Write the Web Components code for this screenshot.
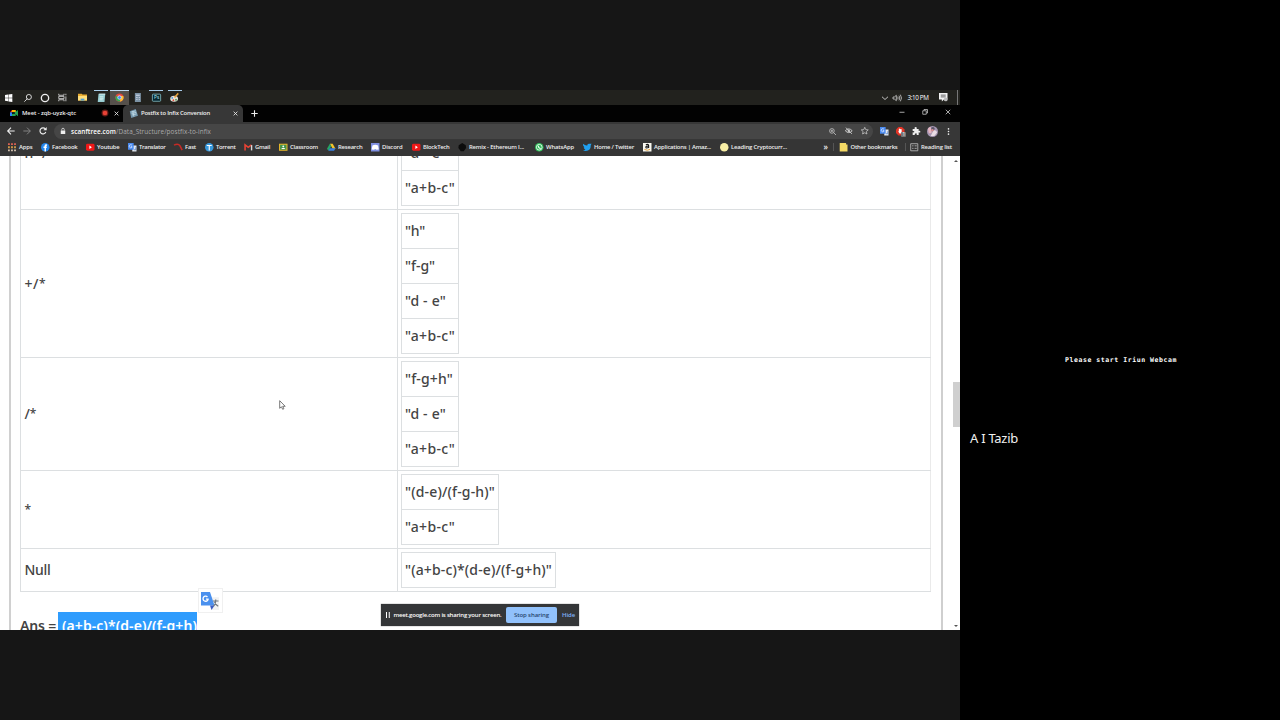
<!DOCTYPE html>
<html lang="en"><head><meta charset="utf-8"><title>Meeting</title>
<style>html,body{margin:0;width:1280px;height:720px;overflow:hidden;background:#161616}</style></head>
<body><meeting-stage></meeting-stage>
<script>
const define=(name,css,html,init)=>customElements.define(name,class extends HTMLElement{
  connectedCallback(){
    if(this.shadowRoot)return;
    const r=this.attachShadow({mode:'open'});
    const h=typeof html==='function'?html(this):html;
    r.innerHTML='<style>*{box-sizing:border-box}'+css+'</style>'+h;
    if(init)init(this,r);
  }});

/* A single-line label whose tracking is adjusted to fill a given width. */
define('fit-text',':host{display:block;white-space:pre;flex:none}span{display:inline-block}b{font-weight:600;color:#fff}em{font-style:normal;font-size:12px;line-height:10px;vertical-align:1.500px}',
  e=>`<span>${e.getAttribute('t')}</span>`,
  (e,r)=>{const w=+e.getAttribute('w'),s=r.querySelector('span');
    e.style.width=w+'px';
    const n=s.textContent.length,d=(w-s.getBoundingClientRect().width)/n;
    s.style.letterSpacing=d.toFixed(3)+'px';});

const icons={
win:'<path fill="#fff" d="M0 1.5l4.6-.7v4.8H0zM5.2.7L11 0v5.6H5.2zM0 6.2h4.6V11L0 10.3zM5.2 6.2H11V12l-5.8-.8z"/>',
search:'<g fill="none" stroke="#eee" stroke-width="1.3"><circle cx="7.3" cy="4.5" r="3.8"/><path d="M5 7L.500 11.500"/></g>',
ring:'<circle cx="6" cy="6" r="4.4" fill="none" stroke="#eee" stroke-width="1.6"/>',
task:'<path fill="none" stroke="#ccc" stroke-width="1.200" d="M1 1v2h7V1M1 11V9h7v2M1 4.5h7v3H1zM10.5 1v2M10.5 4.5v6.5"/>',
explorer:'<path fill="#e9ad32" d="M0 1h5l1 1h6v8H0z"/><path fill="#ffdf7c" d="M0 4h12v6H0z"/><path fill="#4b9fd6" d="M3.500 7.500h5V10h-5z"/>',
note:'<path fill="#95cbd0" d="M2 1h9l-1 11H1z"/><path stroke="#e9f8f7" d="M3 1.500h8M3.500 5h5M3.500 7h5M3.500 9h4"/>',
calc:'<path fill="#7c93a5" d="M2.500 0h8v12h-8z"/><path stroke="#eef" d="M4 3h5M4 6h1m1 0h1m1 0h1M4 8.500h1m1 0h1m1 0h1"/>',
ps:'<rect x=".500" y="1.500" width="11" height="9.500" rx="1" fill="#062630" stroke="#8ec9d0" stroke-width="1"/><text x="2.700" y="8.600" font-size="6.500" fill="#b8eef5" font-family="Open Sans">Ps</text>',
paint:'<ellipse cx="5.500" cy="7.500" rx="5.200" ry="4" fill="#e8e2da"/><circle cx="3" cy="6.500" r="1.200" fill="#4b96db"/><circle cx="4.500" cy="9.500" r="1.200" fill="#d64b3b"/><circle cx="8" cy="9" r="1.200" fill="#4a9853"/><path stroke="#e4a03d" stroke-width="2" d="M6 6l5-5.500"/>',
chrome:'<circle cx="6" cy="6" r="5.500" fill="#e64a3c"/><path fill="#35a853" d="M1.200 3.500L6 6l1 5.400A5.500 5.500 0 0 1 1.200 3.500z"/><path fill="#fbc02f" d="M6 4h5.100A5.500 5.500 0 0 1 6.500 11.500L8 6z"/><circle cx="6" cy="6" r="2.400" fill="#4285f4" stroke="#fff" stroke-width=".8"/>',
meet:'<path fill="#23a653" d="M3 1.500h5.500v2.500L12 1.500v9.500L8.500 8v2.500H2V7.500h5V5H3z"/><path fill="#2684fc" d="M0 5h3v5.500H0z"/><path fill="#ea4335" d="M0 5l3-3.500V5z"/><path fill="#ffba00" d="M3 1.500h5.500v3H3z"/><path fill="#15212a" d="M3.500 4.800h3v2.800h-3z"/>',
rec:'<circle cx="6" cy="6" r="5.200" fill="#691c17"/><circle cx="6" cy="6" r="3.500" fill="#e84236"/>',
scan:'<path fill="#7396ac" d="M1 3l8-3 3 9-9 3z"/><path stroke="#c7dfea" d="M3 4l6-1.500M3.500 6l6-1.500M4 8l6-1.500M5 3l1.500 7"/>',
back:'<path fill="none" stroke="#eee" stroke-width="1.600" d="M11.500 6H1m5-5L1 6l5 5"/>',
fwd:'<path fill="none" stroke="#888" stroke-width="1.400" d="M.500 6H11M6 1l5 5-5 5"/>',
reload:'<path fill="none" stroke="#eee" stroke-width="1.700" d="M10.200 7.500A4.500 4.500 0 1 1 9.500 3"/><path fill="#eee" d="M11.500 0v5h-5z"/>',
lock:'<path fill="#eee" d="M1.500 5h9v7h-9z"/><path fill="none" stroke="#eee" stroke-width="1.500" d="M3.500 5V3a2.500 2.500 0 0 1 5 0v2"/>',
x:'<path fill="none" stroke="#eee" stroke-width="2" d="M1.500 1.500l9 9m0-9l-9 9"/>',
xt:'<path fill="none" stroke="#ddd" stroke-width="1.500" d="M1.500 1.500l9 9m0-9l-9 9"/>',
plus:'<path stroke="#eee" stroke-width="1.900" d="M6 .500v11M.500 6h11"/>',
min:'<path stroke="#ddd" stroke-width="1.500" d="M1 6.500h10"/>',
max:'<path fill="none" stroke="#ddd" stroke-width="1.400" d="M1.500 3.500h7v7h-7zM4 3V1h7v7H9"/>',
chev:'<path fill="none" stroke="#ddd" stroke-width="1.700" d="M0 3.500l6 5.500 6-5.500"/>',
vol:'<path fill="none" stroke="#ddd" stroke-width="1.100" d="M0 4.500v3h2L5 10V2L2 4.500zM7 4q1.500 2 0 4M9 2.500q2.500 3.500 0 7M11 1q3.500 5 0 10"/>',
notif:'<path fill="#f1f1f1" d="M0 0h12v9H7l-3 3V9H0z"/><path stroke="#333" d="M2.500 3h7M2.500 5.500h7"/><circle cx="9.500" cy="9" r="2.600" fill="#bbb"/>',
zoom:'<g fill="none" stroke="#ccc" stroke-width="1.300"><circle cx="5" cy="5" r="4"/><path d="M8 8l4 4M3 5h4M5 3v4"/></g>',
eye:'<path fill="none" stroke="#ccc" stroke-width="1.500" d="M.500 6q5.500-6 11 0-5.500 6-11 0M1.500 1l9.500 10"/><circle cx="6" cy="6" r="1.900" fill="#ccc"/>',
star:'<path fill="none" stroke="#ccc" stroke-width="1.200" d="M6 .500l1.600 3.700 4 .4-3 2.700.9 3.900L6 9.200l-3.500 2 .9-3.900-3-2.700 4-.4z"/>',
trans:'<path fill="#d4dce6" d="M5 4h7v8H6z"/><path fill="#4785e8" d="M0 0h6l2.700 9H0z"/><path fill="none" stroke="#fff" d="M5 3.500A2 2 0 1 0 5 6V5H3.500"/><path fill="none" stroke="#6a7c92" stroke-width=".8" d="M7.500 6h4M9.500 5v1q0 2-2 4m.5-3q1 2 3 3"/>',
transbar:'<path fill="#e3e8ee" d="M6 3.500h6V12H6z"/><path fill="#4a8af0" d="M0 0h8v9.500H0z"/><path fill="none" stroke="#dbe8ff" stroke-width="1.100" d="M5.500 3A2.200 2.200 0 1 0 5.500 6.200V5H4"/><path fill="none" stroke="#4a78c0" d="M8.500 9.500h2.500V6"/>',
gtrans:'<path fill="#f1f2f3" d="M6 3.500h6V12H7z"/><path fill="#4a90ee" d="M0 0h6l3 9H0z"/><path fill="#3a5cc4" d="M6 9h3l-2 3z"/><path fill="none" stroke="#fff" stroke-width=".9" d="M4.300 3.300A1.700 1.700 0 1 0 4.700 5V4.700H3.300"/><path fill="none" stroke="#6f7780" stroke-width=".8" d="M8 6h3.700M9.800 5v1q0 2-1.500 3.500M9 6.500q.7 2 2.500 3"/>',
ublock:'<path fill="#e23426" d="M3.500 0h5L12 3.500v5L8.500 12h-5L0 8.500v-5z"/><path fill="#fff" d="M4 3q1-2 2 0 2-1 2 1v5H5L3 6h1z"/>',
puzzle:'<path fill="#eee" d="M1 3h3q-1-3 1.500-3T7 3h3v3q2.500-1 2.500 1T10 8v4H7q1-2.500-1-2.500T4 12H1V8q2.500.5 2.500-1T1 6z"/>',
avatar:'<circle cx="6" cy="6" r="6" fill="#a596b2"/><path fill="#e6b5c1" d="M1 3q3-4 4 0v5H2z"/><path fill="#5a5468" d="M4.500 2q3-2 4 1l-1 2H5z"/><path fill="#eadde4" d="M7 5q3-1 4 2L8 11H4z"/><circle cx="6" cy="4.500" r="1.300" fill="#d78f8f"/>',
dots:'<g fill="#eee"><circle cx="6" cy="1.500" r="1.400"/><circle cx="6" cy="6" r="1.400"/><circle cx="6" cy="10.500" r="1.400"/></g>',
apps:'<g stroke-width="2.600" stroke-dasharray="2.600 1.700"><path stroke="#df6254" d="M0 1.500h12"/><path stroke="#d49a48" d="M0 6h12"/><path stroke="#d4c2b0" d="M0 10.500h12"/></g>',
fb:'<circle cx="6" cy="6" r="6" fill="#2386ed"/><path fill="#fff" d="M5 12V7H3.500V5H5V4q0-2.500 3.500-2V4Q7 3.800 7 5h1.500L8 7H7v5z"/>',
yt:'<rect y="1.200" width="12" height="9.600" rx="2" fill="#f01818"/><path fill="#fff" d="M4.800 3.700L8.300 6 4.800 8.300z"/>',
fast:'<path fill="none" stroke="#c52a25" stroke-width="2.300" d="M0 3q6-3 8.500 1l3 6"/>',
torrent:'<circle cx="6" cy="6" r="6" fill="#3798dc"/><path stroke="#fff" stroke-width="1.600" d="M2.500 3.500h7M6 3v7.500"/>',
gmail:'<path fill="none" stroke="#ea4335" stroke-width="2.200" d="M1.500 10.500v-8L6 6l4.500-3.500"/><path stroke="#d9d9d9" stroke-width="2" d="M10.700 3v7.500"/>',
classroom:'<path fill="#e5b52a" d="M0 1h12v10H0z"/><path fill="#42924c" d="M1.500 2.500h9v7h-9z"/><circle cx="6" cy="4.700" r="1.300" fill="#fff"/><path fill="#fff" d="M3 8.500q3-3.500 6 0z"/>',
drive:'<path fill="#f5c52c" d="M4 1h4l4 7H8z"/><path fill="#25a566" d="M4 1l2 3.500L2 11 0 8z"/><path fill="#397fe1" d="M2 11l2-3.500h8L10 11z"/>',
discord:'<path fill="#7f8fe1" d="M0 0h12v12H0z"/><path fill="#fff" d="M2 3.500q4-2 8 0L11 9 8 9.500 6 8.500 4 9.500 1 9z"/>',
remix:'<path fill="#0c0c0c" d="M6 0l5 3 .5 4L8 11.500H4L.5 7 1 3z"/>',
wa:'<circle cx="6" cy="6" r="6" fill="#31bd5b"/><circle cx="6" cy="6" r="4" fill="none" stroke="#fff" stroke-width="1.100"/><path fill="none" stroke="#fff" stroke-width="1.500" d="M4.500 4q0 3 3.500 4"/>',
twitter:'<path fill="#20a0f0" d="M0 1q3 3 6 2.500Q6 .5 9 1l3 .2-1 2q0 8-7 8Q2 11.200 0 10q2.500 0 3.500-1Q1.500 8.500 1 6.500L2 6Q-.5 4 0 1z"/>',
amazon:'<path fill="#f8f8f0" d="M0 0h12v12H0z"/><path fill="none" stroke="#151515" stroke-width="1.500" d="M4 2.500q4-1.500 4 1v3q-4 1.500-4-.5T8 4.500"/><path fill="none" stroke="#e39b31" stroke-width="1.300" d="M2 9q4 2.500 8 0"/>',
coin:'<circle cx="6" cy="6" r="6" fill="#f8eea5"/>',
folder:'<path fill="#f5da65" d="M1 0h9v2h2v10H1z"/>',
list:'<path fill="none" stroke="#bbb" stroke-width="1.200" d="M1 1h10v10H1zM3 4h2m1.500 0h3M3 7.500h2m1.500 0h3"/>',
pause:'<path stroke="#fff" stroke-width="2" d="M3 0v12M8.500 0v12"/>'
};
/* Icon glyph on a 12-unit grid; s is the drawn size in px. */
define('ui-icon',':host{display:block;flex:none}svg{display:block;overflow:visible}',
  e=>{const s=e.getAttribute('s')||9;return `<svg width="${s}" height="${s}" viewBox="0 0 12 12">${icons[e.getAttribute('n')]}</svg>`;});

define('task-button',':host{display:flex;flex:none;width:18.4px;height:15px;align-items:center;justify-content:center}i{position:absolute}:host([open]){background:linear-gradient(#a9cce8,#a9cce8) center top/14px 1px no-repeat}:host([active]){background:#55504b;box-shadow:inset 0 1px #bed8ee}',
 e=>`<ui-icon n="${e.getAttribute('n')}" s="${e.getAttribute('s')||9}"></ui-icon>`);

define('task-bar',`:host{display:flex;height:15px;background:#22221e;font:6.300px "Open Sans",sans-serif;color:#fff}
 .tray{margin-left:auto;display:flex;align-items:center;width:79px}`,
 `<task-button n="win" s="8"></task-button><task-button n="search" s="8"></task-button><task-button n="ring" s="10" style="width:17px"></task-button><task-button n="task" s="9"></task-button><task-button n="explorer" style="width:19.800px"></task-button><task-button n="note" open></task-button><task-button n="chrome" active></task-button><task-button n="calc"></task-button><task-button n="ps" open></task-button><task-button n="paint" open></task-button>
 <div class="tray"><ui-icon n="chev" s="6" style="margin:0 5px 0 1px"></ui-icon><ui-icon n="vol" s="8"></ui-icon><fit-text t="3:10 PM" w="21" style="margin-left:6.500px"></fit-text><ui-icon n="notif" s="8.500" style="margin-left:10px"></ui-icon><span style="width:1px;height:15px;background:#777;margin-left:9.500px"></span></div>`);

define('browser-tab',`:host{display:flex;flex:none;align-items:center;height:17px}
 :host([on]){background:#373737;border-radius:5px 5px 0 0}`,'<slot></slot>');

define('tab-strip',`:host{display:flex;height:17px;background:#020202;color:#eee;font:600 5.900px "Open Sans",sans-serif}
 .win{margin-left:auto;display:flex;align-items:center;height:14px;gap:17px;padding-right:9px}`,
 `<browser-tab style="width:123px;padding:0 0 1px 10px"><ui-icon n="meet" s="8"></ui-icon><fit-text t="Meet - zqb-uyzk-qtc" w="54" style="margin-left:4px"></fit-text><ui-icon n="rec" s="8" style="margin-left:25px"></ui-icon><ui-icon n="x" s="5" style="margin-left:4.500px"></ui-icon></browser-tab>
 <browser-tab on style="width:120px;padding:0 0 1px 6px"><ui-icon n="scan" s="9"></ui-icon><fit-text t="Postfix to Infix Conversion" w="69" style="margin-left:3px"></fit-text><ui-icon n="x" s="5" style="margin-left:22.500px"></ui-icon></browser-tab>
 <ui-icon n="plus" s="7" style="margin:5px 0 0 8px"></ui-icon>
 <div class="win"><ui-icon n="min" s="6"></ui-icon><ui-icon n="max" s="6"></ui-icon><ui-icon n="xt" s="6"></ui-icon></div>`);

define('address-bar',`:host{display:flex;align-items:center;height:18px;background:#373737;font:6.400px "Open Sans",sans-serif;padding-left:7px;color:#aaa}
 .box{display:flex;align-items:center;width:819px;height:15px;background:#464646;border-radius:8px;margin-left:7px;padding-left:5.500px}
 .act{position:relative;margin-left:7px}.act+.act{margin-left:7.300px}
 i{position:absolute;right:-2px;bottom:-2px;width:5px;height:5px;background:#777;border-radius:1px;font:4.500px/5px "Open Sans";text-align:center;color:#fff}`,
 `<ui-icon n="back" s="8"></ui-icon><ui-icon n="fwd" s="8" style="margin-left:8px"></ui-icon><ui-icon n="reload" s="8" style="margin-left:8px"></ui-icon>
 <div class="box"><ui-icon n="lock" s="6"></ui-icon><fit-text t="&lt;b&gt;scanftree.com&lt;/b&gt;/Data_Structure/postfix-to-infix" w="140" style="margin-left:5.500px"></fit-text>
 <ui-icon n="zoom" s="7" style="margin-left:618px"></ui-icon><ui-icon n="eye" s="7.500" style="margin-left:8.500px"></ui-icon><ui-icon n="star" s="7.500" style="margin-left:8.500px"></ui-icon></div>
 <div class="act"><ui-icon n="transbar" s="8.500"></ui-icon></div><div class="act"><ui-icon n="ublock" s="8.500"></ui-icon><i>1</i></div><div class="act"><ui-icon n="puzzle" s="8"></ui-icon></div><div class="act"><ui-icon n="avatar" s="11"></ui-icon></div><ui-icon n="dots" s="7" style="margin-left:7.500px"></ui-icon>`);

define('book-mark',':host{display:flex;flex:none;align-items:center;gap:3px}',
 e=>`<ui-icon n="${e.getAttribute('n')}" s="8.500"></ui-icon><fit-text t="${e.getAttribute('t')}" w="${e.getAttribute('w')}"></fit-text>`);

const marks=[['apps','Apps',13.500,33],['fb','Facebook',25.500,45],['yt','Youtube',22.500,42],['transbar','Translator',26.500,46],['fast','Fast',11,31],['torrent','Torrent',19.500,39],['gmail','Gmail',15,35],['classroom','Classroom',28,48],['drive','Research',24.500,44],['discord','Discord',20.500,41],['yt','BlockTech',26.500,46],['remix','Remix - Ethereum I...',55,77],['wa','WhatsApp',28,48],['twitter','Home / Twitter',40,60],['amazon','Applications | Amaz...',57,77],['coin','Leading Cryptocurr...',56,104]];
define('bookmark-bar',`:host{display:flex;align-items:center;height:16px;background:#353535;color:#eee;font:600 5.900px "Open Sans",sans-serif;padding:0 0 2px 7.500px}u{width:1px;height:8px;background:#555}`,
 marks.map(m=>`<book-mark n="${m[0]}" t="${m[1]}" w="${m[2]}" style="width:${m[3]}px"></book-mark>`).join('')+
 `<fit-text t="»" w="5" style="font-size:8px;margin-top:-2px"></fit-text><u style="margin-left:4.500px"></u><book-mark n="folder" t="Other bookmarks" w="47" style="width:65.500px;margin-left:5px"></book-mark><u></u><book-mark n="list" t="Reading list" w="31" style="margin-left:4px"></book-mark>`);

define('stack-box',`:host{display:block;width:max-content;border:1px solid #dcdfe1;border-bottom:0}
 div{height:35px;border-bottom:1px solid #dcdfe1;padding:0 3px;display:flex;align-items:center}`,
 e=>e.getAttribute('v').split(';').map(s=>{const [t,w]=s.split('|');return `<div><fit-text t="&quot;${t}&quot;" w="${w}"></fit-text></div>`}).join(''));

define('step-row',`:host{display:grid;grid-template-columns:377px 534px;border-bottom:1px solid #dcdfe1;width:911px}
 .l{display:flex;align-items:center;padding:0 0 0 3.500px;border-left:1px solid #dcdfe1}.r{border-left:1px solid #dcdfe1;border-right:1px solid #eaeaea;padding:3px}`,
 e=>{const [t,w]=e.getAttribute('op').split('|');return `<div class="l"><fit-text t="${t.replace('*','&lt;em&gt;*&lt;/em&gt;')}" w="${w}"></fit-text></div><div class="r"><stack-box v="${e.getAttribute('v')}"></stack-box></div>`});

define('web-page',`:host{display:flex;position:relative;height:474px;overflow:hidden;background:#fff;font:500 14px/20px "Noto Sans",sans-serif;color:#444}
 .doc{width:934px;margin-left:9px;height:474px;border-left:2px solid #d0d0d0;border-right:2px solid #cfcfcf;padding-left:9px;overflow:hidden}
 .tbl{margin-top:-59px}
 .ans{display:flex;margin-top:20px;font-weight:600}.sel{background:#2f9cfd;color:#fff;height:30px;padding:4px 0 0 4px;width:139px}
 .lab{padding-top:4px;width:38px}
 .sb{margin-left:9px;width:8px;display:flex;flex-direction:column;align-items:center}
 .sb i{width:7px;height:45px;background:#cfcfcf;margin:220px 0 auto}
 .sb b{border:2px solid transparent}.up{border-bottom-color:#555!important;margin-top:2px}.dn{border-top-color:#555!important;margin-bottom:1px}
 .cur{position:absolute;left:279px;top:244px}
 .tr{position:absolute;left:198px;top:432px;width:25px;height:25px;background:#fff;border:1px solid #f0f0f0;padding:3px 2px}
 .share{position:absolute;left:381px;top:448px;width:198px;height:22px;background:#343638;display:flex;align-items:center;color:#fff;font:600 6px "Open Sans",sans-serif;padding:0 0 1px 4px;box-shadow:0 0 1px #666}
 .btn{background:#91c1fb;color:#27466e;width:51px;height:16px;border-radius:2px;display:flex;align-items:center;justify-content:center;margin:0 5px 0 4.500px}`,
 `<div class="doc"><div class="tbl">
 <step-row op="h+/*|30" v="f-g|30;d - e|41;a+b-c|50"></step-row>
 <step-row op="+/*|21.500" v="h|20;f-g|30;d - e|41;a+b-c|50"></step-row>
 <step-row op="/*|11.500" v="f-g+h|48;d - e|41;a+b-c|50"></step-row>
 <step-row op="*|6" v="(d-e)/(f-g-h)|90;a+b-c|50"></step-row>
 <step-row op="Null|26" v="(a+b-c)*(d-e)/(f-g+h)|147"></step-row></div>
 <div class="ans"><div class="lab"><fit-text t="Ans =" w="36"></fit-text></div><div class="sel"><fit-text t="(a+b-c)*(d-e)/(f-g+h)" w="135"></fit-text></div></div></div>
 <div class="sb"><b class="up"></b><i></i><b class="dn"></b></div>
 <svg class="cur" width="7" height="10" viewBox="0 0 7 10"><path d="M.7.7v7.600l1.700-1.500 1.300 2.500 1.200-.6-1.200-2.400h2.500z" fill="#fff" stroke="#555" stroke-width=".8"/></svg>
 <div class="tr"><ui-icon n="gtrans" s="18"></ui-icon></div>
 <div class="share"><ui-icon n="pause" s="6"></ui-icon><fit-text t="meet.google.com is sharing your screen." w="108" style="margin-left:2.500px"></fit-text><div class="btn"><fit-text t="Stop sharing" w="35"></fit-text></div><fit-text t="Hide" w="13" style="color:#80b4f8"></fit-text></div>`);

define('shared-screen',':host{display:block;width:960px;padding-top:90px;height:720px;background:#161616}',
 '<task-bar></task-bar><tab-strip></tab-strip><address-bar></address-bar><bookmark-bar></bookmark-bar><web-page></web-page>');
define('participant-panel',`:host{display:block;width:320px;height:720px;background:#000;color:#fff;padding-top:355px}
 .msg{font:bold 6.500px/10px "DejaVu Sans Mono",monospace;margin-left:105px}
 .name{font:13px/18px "Noto Sans",sans-serif;color:#f0f0f0;margin:64px 0 0 10px}`,
 '<fit-text class="msg" t="Please start Iriun Webcam" w="112"></fit-text><fit-text class="name" t="A I Tazib" w="48"></fit-text>');
define('meeting-stage',':host{display:flex;width:1280px;height:720px}','<shared-screen></shared-screen><participant-panel></participant-panel>');
</script></body></html>
